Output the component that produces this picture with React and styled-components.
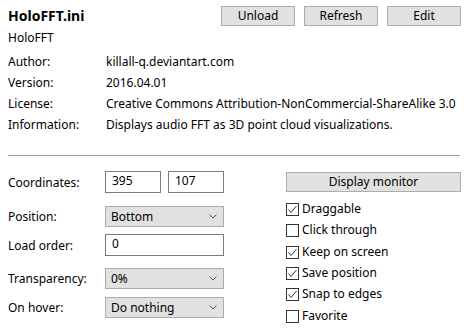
import React from 'react';
import styled, { createGlobalStyle } from 'styled-components';

const Global = createGlobalStyle`
    body {
        margin: 0;
        background: #ffffff;
        font-family: "Noto Sans", "Open Sans", sans-serif;
        font-size: 12px;
        color: #000000;
    }
`;

const Page = styled.div`
    width: 468px;
    height: 330px;
    box-sizing: border-box;
    padding: 6px 7px 0 8px;
    overflow: hidden;
`;

const Header = styled.div`
    display: flex;
    justify-content: space-between;
    align-items: flex-start;
`;

const Title = styled.div`
    font-size: 14px;
    font-weight: 700;
    line-height: 18px;
    margin-top: 1px;
`;

const ButtonRow = styled.div`
    display: flex;
    gap: 9px;
`;

const Button = styled.button`
    width: ${(p) => p.$width || 74}px;
    height: 20px;
    padding: 0;
    box-sizing: border-box;
    background: #e1e1e1;
    border: 1px solid #adadad;
    font-family: inherit;
    font-size: 12px;
    color: #000;
    line-height: 18px;
`;

const Subtitle = styled.div`
    line-height: 21px;
    margin-top: 1px;
`;

const InfoGrid = styled.div`
    display: grid;
    grid-template-columns: 98px 1fr;
    grid-auto-rows: 21px;
    align-items: center;
    margin-top: 3px;
`;

const Divider = styled.div`
    border-top: 1px solid #a0a0a0;
    margin: 20px 1px 0 0;
`;

const Settings = styled.div`
    display: flex;
    margin-top: 15px;
`;

const LeftColumn = styled.div`
    width: 278px;
    display: flex;
    flex-direction: column;
`;

const Row = styled.div`
    display: flex;
    align-items: center;
    margin-top: ${(p) => p.$top || 0}px;
`;

const Label = styled.div`
    width: 97px;
`;

const Controls = styled.div`
    display: flex;
    gap: 7px;
`;

const TextBox = styled.div`
    width: ${(p) => p.$width}px;
    height: 22px;
    box-sizing: border-box;
    border: 1px solid #7a7a7a;
    background: #fff;
    padding: 0 6px;
    line-height: 18px;
`;

const Select = styled.div`
    width: 119px;
    height: 21px;
    box-sizing: border-box;
    border: 1px solid #acacac;
    background: #e1e1e1;
    padding: 0 6px 0 5px;
    display: flex;
    align-items: center;
    justify-content: space-between;
`;

const RightColumn = styled.div`
    display: flex;
    flex-direction: column;
    padding-top: 1px;
`;

const CheckList = styled.div`
    display: flex;
    flex-direction: column;
    margin-top: 6px;
`;

const CheckItem = styled.div`
    display: flex;
    align-items: center;
    height: 21.3px;
    gap: 3px;
`;

const Box = styled.div`
    width: 13px;
    height: 13px;
    box-sizing: border-box;
    border: 1px solid #333;
    background: #fff;
    display: flex;
    align-items: center;
    justify-content: center;
    margin-top: 2px;
`;

const Chevron = () => (
    <svg width="8" height="5" viewBox="0 0 8 5">
        <polyline points="0.5,0.5 4,4 7.5,0.5" fill="none" stroke="#555" strokeWidth="1" />
    </svg>
);

const Tick = () => (
    <svg width="11" height="11" viewBox="0 0 11 11">
        <polyline points="1.5,5.5 4,8.5 9.5,2" fill="none" stroke="#333" strokeWidth="1" />
    </svg>
);

const info = [
    ['Author:', 'killall-q.deviantart.com'],
    ['Version:', '2016.04.01'],
    ['License:', 'Creative Commons Attribution-NonCommercial-ShareAlike 3.0'],
    ['Information:', 'Displays audio FFT as 3D point cloud visualizations.'],
];

const options = [
    ['Draggable', true],
    ['Click through', false],
    ['Keep on screen', true],
    ['Save position', true],
    ['Snap to edges', true],
    ['Favorite', false],
];

export default function App() {
    return (
        <Page>
            <Global />
            <Header>
                <Title>HoloFFT.ini</Title>
                <ButtonRow>
                    <Button>Unload</Button>
                    <Button>Refresh</Button>
                    <Button>Edit</Button>
                </ButtonRow>
            </Header>
            <Subtitle>HoloFFT</Subtitle>
            <InfoGrid>
                {info.map(([k, v]) => (
                    <React.Fragment key={k}>
                        <div>{k}</div>
                        <div>{v}</div>
                    </React.Fragment>
                ))}
            </InfoGrid>
            <Divider />
            <Settings>
                <LeftColumn>
                    <Row>
                        <Label>Coordinates:</Label>
                        <Controls>
                            <TextBox $width={56}>395</TextBox>
                            <TextBox $width={56}>107</TextBox>
                        </Controls>
                    </Row>
                    <Row $top={13}>
                        <Label>Position:</Label>
                        <Select>
                            <span>Bottom</span>
                            <Chevron />
                        </Select>
                    </Row>
                    <Row $top={7}>
                        <Label>Load order:</Label>
                        <TextBox $width={119}>0</TextBox>
                    </Row>
                    <Row $top={12}>
                        <Label>Transparency:</Label>
                        <Select>
                            <span>0%</span>
                            <Chevron />
                        </Select>
                    </Row>
                    <Row $top={8}>
                        <Label>On hover:</Label>
                        <Select>
                            <span>Do nothing</span>
                            <Chevron />
                        </Select>
                    </Row>
                </LeftColumn>
                <RightColumn>
                    <Button $width={175}>Display monitor</Button>
                    <CheckList>
                        {options.map(([name, on]) => (
                            <CheckItem key={name}>
                                <Box>{on && <Tick />}</Box>
                                <span>{name}</span>
                            </CheckItem>
                        ))}
                    </CheckList>
                </RightColumn>
            </Settings>
        </Page>
    );
}
